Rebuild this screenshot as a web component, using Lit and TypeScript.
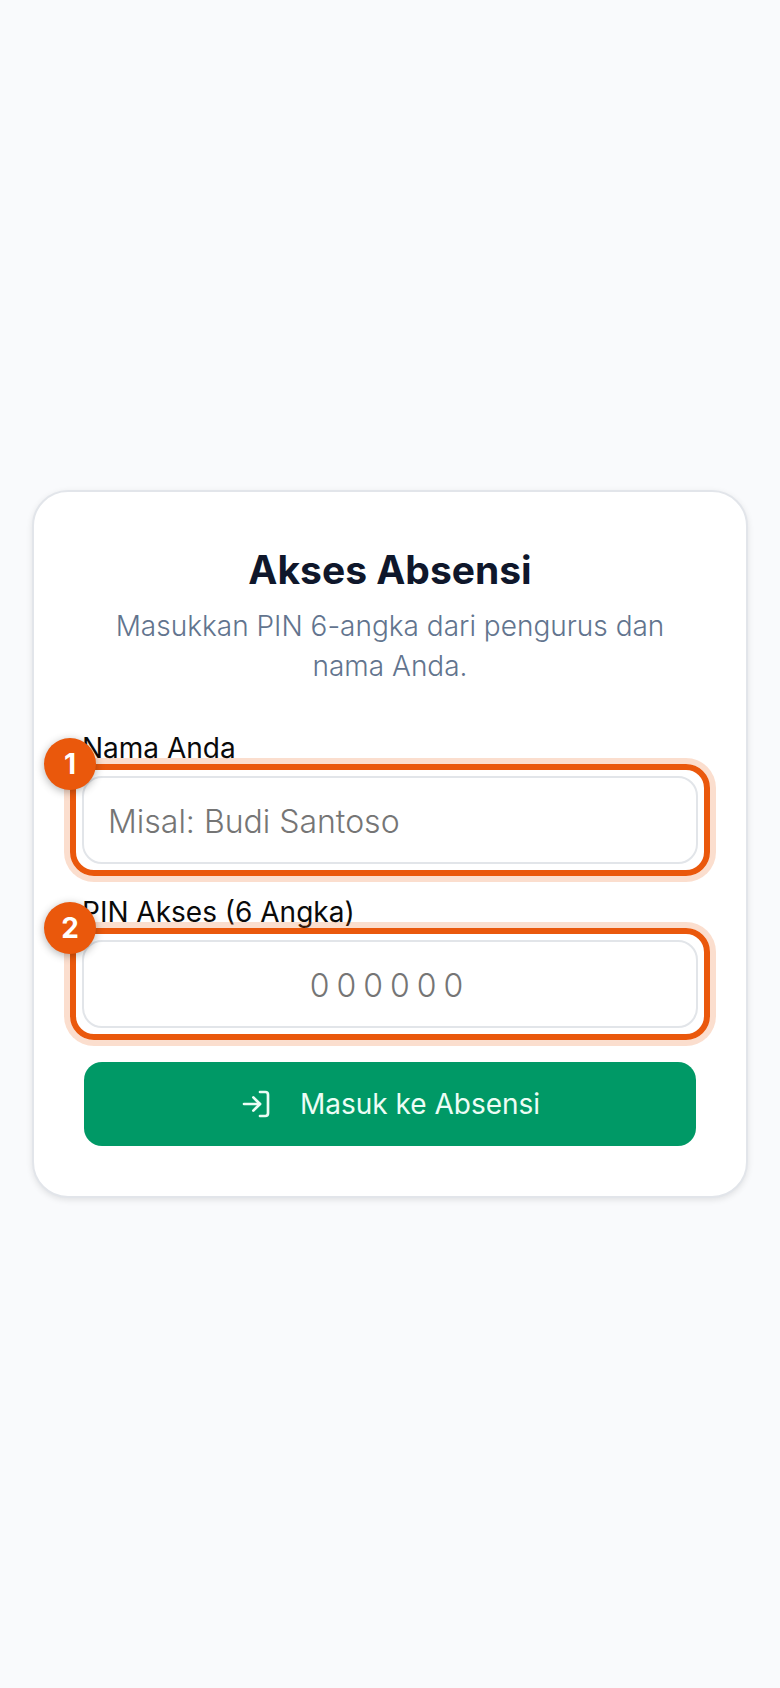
import { LitElement, html, css } from 'lit';
import { customElement, property, state } from 'lit/decorators.js';

@customElement('step-marker')
export class StepMarker extends LitElement {
  static styles = css`
    :host {
      display: block;
      position: relative;
    }

    .ring {
      position: absolute;
      inset: -12px;
      box-sizing: border-box;
      border: 6px solid #ea580c;
      border-radius: 24px;
      box-shadow: 0 0 0 6px rgba(234, 88, 12, 0.2);
      pointer-events: none;
    }

    .badge {
      position: absolute;
      top: -38px;
      left: -38px;
      display: flex;
      align-items: center;
      justify-content: center;
      width: 52px;
      height: 52px;
      border-radius: 50%;
      background: #ea580c;
      box-shadow: 0 2px 8px rgba(0, 0, 0, 0.3);
      color: #fff;
      font-size: 28px;
      font-weight: 700;
      line-height: 32px;
      pointer-events: none;
    }
  `;

  @property({ type: Number })
  step = 1;

  render() {
    return html`
      <slot></slot>
      <div class="ring"></div>
      <span class="badge">${this.step}</span>
    `;
  }
}

@customElement('app-root')
export class AppRoot extends LitElement {
  static styles = css`
    :host {
      display: flex;
      align-items: center;
      justify-content: center;
      box-sizing: border-box;
      min-height: 100vh;
      padding: 32px;
      background: #f9fafc;
      color: #0a0a0a;
      font-family: Inter, 'Liberation Sans', sans-serif;
    }

    .card {
      box-sizing: border-box;
      width: 100%;
      max-width: 768px;
      padding: 48px;
      border: 2px solid #e2e5ea;
      border-radius: 36px;
      background: #fff;
      box-shadow: 0 2px 6px rgba(0, 0, 0, 0.1);
    }

    header {
      margin-bottom: 46px;
      text-align: center;
    }

    h1 {
      margin: 0 0 6px;
      color: #0f172b;
      font-size: 39px;
      font-weight: 700;
      line-height: 60px;
    }

    p {
      margin: 0;
      color: #62748e;
      font-size: 28px;
      font-weight: 300;
      line-height: 40px;
    }

    form {
      display: flex;
      flex-direction: column;
      gap: 32px;
    }

    .field {
      display: flex;
      flex-direction: column;
      gap: 12px;
    }

    label {
      font-size: 28px;
      line-height: 32px;
    }

    input {
      display: block;
      box-sizing: border-box;
      width: 100%;
      height: 88px;
      padding: 2px 24px 0;
      border: 2px solid #e2e5e9;
      border-radius: 20px;
      background: #fff;
      color: inherit;
      font: inherit;
      font-size: 32px;
      font-weight: 300;
    }

    input::placeholder {
      color: #757575;
    }

    .pin {
      letter-spacing: 7px;
      text-align: center;
    }

    button {
      display: flex;
      align-items: center;
      justify-content: center;
      gap: 28px;
      height: 88px;
      padding: 0 24px;
      border: 2px solid transparent;
      border-radius: 20px;
      background: #096;
      background-clip: padding-box;
      color: #ecfdf5;
      font: inherit;
      font-size: 28px;
      cursor: pointer;
    }

    svg {
      flex: none;
      width: 32px;
      height: 32px;
      fill: none;
      stroke: currentColor;
      stroke-width: 2;
      stroke-linecap: round;
      stroke-linejoin: round;
    }
  `;

  @state()
  name = '';

  @state()
  pin = '';

  render() {
    return html`
      <main class="card">
        <header>
          <h1>Akses Absensi</h1>
          <p>Masukkan PIN 6-angka dari pengurus dan nama Anda.</p>
        </header>
        <form @submit=${this.onSubmit}>
          <div class="field">
            <label for="name">Nama Anda</label>
            <step-marker .step=${1}>
              <input
                id="name"
                type="text"
                placeholder="Misal: Budi Santoso"
                .value=${this.name}
                @input=${this.onName}
              />
            </step-marker>
          </div>
          <div class="field">
            <label for="pin">PIN Akses (6 Angka)</label>
            <step-marker .step=${2}>
              <input
                id="pin"
                class="pin"
                type="text"
                inputmode="numeric"
                maxlength="6"
                placeholder="000000"
                .value=${this.pin}
                @input=${this.onPin}
              />
            </step-marker>
          </div>
          <button type="submit">
            <svg viewBox="0 0 24 24" aria-hidden="true">
              <path d="M15 3h4a2 2 0 0 1 2 2v14a2 2 0 0 1-2 2h-4" />
              <path d="m10 17 5-5-5-5" />
              <path d="M15 12H3" />
            </svg>
            Masuk ke Absensi
          </button>
        </form>
      </main>
    `;
  }

  onName(e: Event) {
    this.name = (e.target as HTMLInputElement).value;
  }

  onPin(e: Event) {
    this.pin = (e.target as HTMLInputElement).value;
  }

  onSubmit(e: Event) {
    e.preventDefault();
  }
}
